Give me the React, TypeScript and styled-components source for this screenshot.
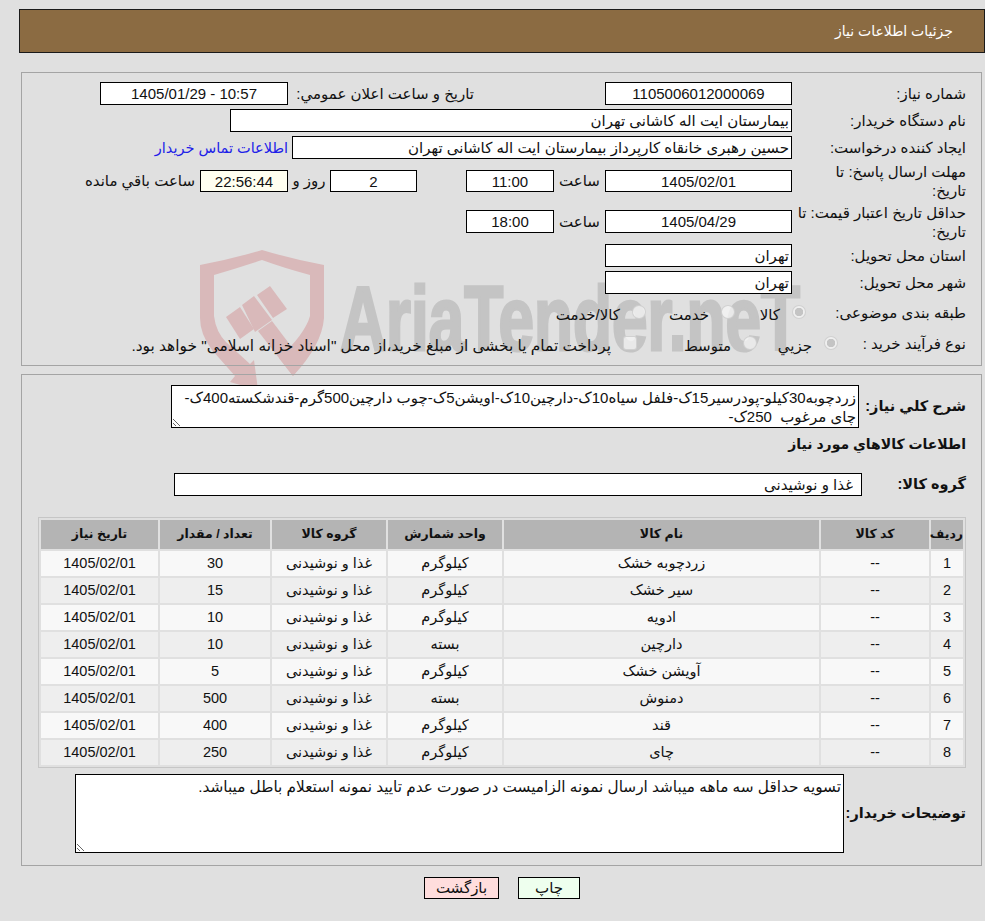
import React from "react";
import styled, { createGlobalStyle } from "styled-components";

const FONT = `"Liberation Sans", "DejaVu Sans", sans-serif`;

const GlobalStyle = createGlobalStyle`
  html, body {
    margin: 0;
    background: #e0e0e0;
  }
  body {
    font-family: ${FONT};
    font-size: 15px;
    color: #111;
    direction: rtl;
  }
`;

const Page = styled.div`
  position: relative;
  width: 985px;
  height: 921px;
  box-sizing: border-box;
  padding: 9px 0 0 19px;
  overflow: hidden;
`;

const Watermark = styled.svg`
  position: absolute;
  left: 190px;
  top: 240px;
  width: 625px;
  height: 160px;
`;

const Content = styled.div`
  position: relative;
  width: 966px;
`;

const Header = styled.div`
  height: 42px;
  line-height: 42px;
  background: #8b6b42;
  border: 1px solid #1a1a1a;
  color: #fff;
  font-size: 14px;
  padding-right: 31px;
  margin-bottom: 19px;
`;

const Panel = styled.div<{ $top?: number; $bottom?: number }>`
  width: 959px;
  margin-right: 3px;
  border: 1px solid #a4a4a4;
  padding: ${(p) => p.$top ?? 9}px 0 ${(p) => p.$bottom ?? 5}px;
  margin-bottom: 8px;
`;

const Row = styled.div<{ $height?: number }>`
  display: flex;
  align-items: center;
  height: ${(p) => p.$height ?? 23}px;
  margin-bottom: 4px;
  padding-right: 15px;
`;

const Label = styled.div<{ $width?: number; $bold?: boolean }>`
  flex: none;
  width: ${(p) => p.$width ?? 174}px;
  padding-left: 4px;
  box-sizing: border-box;
  line-height: 19px;
  font-weight: ${(p) => (p.$bold ? 700 : 400)};
  font-size: ${(p) => (p.$bold ? 14.5 : 15)}px;
  white-space: ${(p) => (p.$bold ? "nowrap" : "normal")};
`;

const Field = styled.input<{
  $width: number;
  $height?: number;
  $ivory?: boolean;
  $center?: boolean;
  $inset?: number;
}>`
  flex: none;
  width: ${(p) => p.$width}px;
  height: ${(p) => p.$height ?? 23}px;
  box-sizing: border-box;
  border: 1px solid #000;
  border-radius: 0;
  outline: none;
  padding: 0 ${(p) => p.$inset ?? 2}px 0 2px;
  margin: 0;
  background: ${(p) => (p.$ivory ? "#fffff0" : "#fff")};
  font-family: ${FONT};
  font-size: 15px;
  color: #111;
  direction: rtl;
  text-align: ${(p) => (p.$center ? "center" : "right")};
`;

const Inline = styled.span<{ $width?: number; $right?: number; $center?: boolean }>`
  flex: none;
  width: ${(p) => (p.$width ? `${p.$width}px` : "auto")};
  padding-right: ${(p) => p.$right ?? 0}px;
  box-sizing: border-box;
  text-align: ${(p) => (p.$center ? "center" : "right")};
  white-space: nowrap;
`;

const ContactLink = styled.a`
  flex: none;
  margin-right: 4px;
  color: #2020e8;
  font-size: 14.5px;
  text-decoration: none;
  white-space: nowrap;
`;

const Option = styled.label<{ $width: number; $size?: number }>`
  flex: none;
  display: flex;
  align-items: center;
  width: ${(p) => p.$width}px;
  padding-top: 6px;
  font-size: ${(p) => p.$size ?? 15}px;
  white-space: nowrap;
`;

const Mark = styled.input<{ $box?: boolean }>`
  appearance: none;
  flex: none;
  width: 14px;
  height: 14px;
  margin: 0 0 6px 12px;
  box-sizing: border-box;
  border: 1.5px solid rgba(205, 205, 205, 0.9);
  border-radius: ${(p) => (p.$box ? "3px" : "50%")};
  background: rgba(245, 245, 245, 0.75);

  &:checked {
    background: radial-gradient(circle, #c4c4c4 0 4px, #efefef 4.5px);
  }
`;

const SectionTitle = styled.div`
  font-weight: 700;
  font-size: 14px;
  line-height: 20px;
  padding-right: 15px;
  margin: 6px 0 19px;
`;

const Notes = styled.textarea<{ $width: number; $height: number; $size?: number }>`
  flex: none;
  width: ${(p) => p.$width}px;
  height: ${(p) => p.$height}px;
  box-sizing: border-box;
  border: 1px solid #000;
  border-radius: 0;
  outline: none;
  margin: 0;
  padding: 2px;
  background: #fff;
  font-family: ${FONT};
  font-size: ${(p) => p.$size ?? 15}px;
  line-height: 19px;
  color: #111;
  direction: rtl;
`;

const ItemsTable = styled.table`
  width: 928px;
  margin: 21px 15px 6px 0;
  table-layout: fixed;
  border: 1px solid #c6c6c6;
  border-collapse: separate;
  border-spacing: 2px;
  font-size: 14.5px;

  th {
    height: 29px;
    padding: 0;
    background: #b4b4b4;
    font-weight: 700;
    font-size: 12.5px;
    line-height: 17px;
  }

  td {
    height: 25px;
    padding: 0;
    line-height: 17px;
    text-align: center;
  }

  tbody tr:nth-child(odd) td {
    background: #f8f8f8;
  }

  tbody tr:nth-child(even) td {
    background: #eeeeee;
  }
`;

const Buttons = styled.div`
  display: flex;
  justify-content: center;
  gap: 19px;
  margin-top: 11px;
`;

const ActionButton = styled.button<{ $tint: string; $width: number }>`
  width: ${(p) => p.$width}px;
  height: 22px;
  padding: 0;
  border: 1px solid #000;
  border-radius: 0;
  background: ${(p) => p.$tint};
  font-family: ${FONT};
  font-size: 15px;
  color: #111;
`;

const columns = [
  { title: "ردیف", width: 32 },
  { title: "کد کالا", width: 108 },
  { title: "نام کالا", width: 315 },
  { title: "واحد شمارش", width: 114 },
  { title: "گروه کالا", width: 114 },
  { title: "تعداد / مقدار", width: 110 },
  { title: "تاریخ نیاز", width: 117 },
];

const items = [
  { name: "زردچوبه خشک", unit: "کیلوگرم", amount: 30 },
  { name: "سیر خشک", unit: "کیلوگرم", amount: 15 },
  { name: "ادویه", unit: "کیلوگرم", amount: 10 },
  { name: "دارچین", unit: "بسته", amount: 10 },
  { name: "آویشن خشک", unit: "کیلوگرم", amount: 5 },
  { name: "دمنوش", unit: "بسته", amount: 500 },
  { name: "قند", unit: "کیلوگرم", amount: 400 },
  { name: "چای", unit: "کیلوگرم", amount: 250 },
];

const GROUP = "غذا و نوشیدنی";
const DESCRIPTION =
  "زردچوبه30کیلو-پودرسیر15ک-فلفل سیاه10ک-دارچین10ک-اویشن5ک-چوب دارچین500گرم-قندشکسته400ک-چای مرغوب  250ک-";
const BUYER_NOTES =
  "تسویه حداقل سه ماهه میباشد ارسال نمونه الزامیست در صورت عدم تایید نمونه استعلام باطل میباشد.";

const App = () => (
  <Page>
    <GlobalStyle />
    <Watermark viewBox="190 240 625 160" aria-hidden="true">
      <g fill="#d9b9ba">
        <path d="M200 265 Q232 259 262 250 Q292 259 324 265 L324 318 Q322 345 293 376 L279 358 Q305 334 310 316 L310 275 Q284 268 262 260 Q238 268 214 275 L214 316 Q216 332 226 342 L250 364 L254 360 L258 390 L230 382 L235 376 L212 350 Q200 334 200 318 Z" />
        <path d="M226 317 L240 307 L254 329 L240 339 Z" />
        <path d="M242 305 L254 296 L272 320 L255 332 Z" />
        <path d="M257 295 L270 286 L287 309 L273 318 Z" />
        <path d="M258 331 L272 321 L303 362 L293 376 Z" />
      </g>
      <text
        x="340"
        y="350"
        fill="#c4c4c4"
        stroke="#c4c4c4"
        strokeWidth="3"
        fontFamily="'Liberation Sans', sans-serif"
        fontWeight="700"
        fontSize="90"
        textLength="460"
        lengthAdjust="spacingAndGlyphs"
        direction="ltr"
      >
        AriaTender.neT
      </text>
    </Watermark>
    <Content>
      <Header>جزئیات اطلاعات نیاز</Header>
      <Panel>
        <Row>
          <Label>شماره نیاز:</Label>
          <Field $width={187} $center readOnly value="1105006012000069" />
          <Inline $width={317} $right={131}>
            تاریخ و ساعت اعلان عمومي:
          </Inline>
          <Field $width={188} $center readOnly value="10:57 - 1405/01/29" />
        </Row>
        <Row>
          <Label>نام دستگاه خریدار:</Label>
          <Field $width={562} readOnly value="بیمارستان ایت اله کاشانی تهران" />
        </Row>
        <Row>
          <Label>ایجاد کننده درخواست:</Label>
          <Field
            $width={500}
            readOnly
            value="حسین رهبری خانقاه کارپرداز بیمارستان ایت اله کاشانی تهران"
          />
          <ContactLink href="#">اطلاعات تماس خریدار</ContactLink>
        </Row>
        <Row $height={36}>
          <Label>
            مهلت ارسال پاسخ: تا
            <br />
            تاریخ:
          </Label>
          <Field $width={187} $height={22} $center readOnly value="1405/02/01" />
          <Inline $width={51} $center>
            ساعت
          </Inline>
          <Field $width={88} $height={22} $center readOnly value="11:00" />
          <Inline $width={49} />
          <Field $width={87} $height={22} $center readOnly value="2" />
          <Inline $width={42} $center>
            روز و
          </Inline>
          <Field $width={88} $height={22} $center $ivory readOnly value="22:56:44" />
          <Inline $right={5}>ساعت باقي مانده</Inline>
        </Row>
        <Row $height={37}>
          <Label>حداقل تاریخ اعتبار قیمت: تا تاریخ:</Label>
          <Field $width={187} $center readOnly value="1405/04/29" />
          <Inline $width={51} $center>
            ساعت
          </Inline>
          <Field $width={88} $center readOnly value="18:00" />
        </Row>
        <Row>
          <Label>استان محل تحویل:</Label>
          <Field $width={187} readOnly value="تهران" />
        </Row>
        <Row>
          <Label>شهر محل تحویل:</Label>
          <Field $width={187} readOnly value="تهران" />
        </Row>
        <Row $height={28}>
          <Label $width={160}>طبقه بندی موضوعی:</Label>
          <Option $width={71}>
            <Mark type="radio" name="category" disabled defaultChecked />
            کالا
          </Option>
          <Option $width={89}>
            <Mark type="radio" name="category" disabled />
            خدمت
          </Option>
          <Option $width={100}>
            <Mark type="radio" name="category" disabled />
            کالا/خدمت
          </Option>
        </Row>
        <Row $height={26}>
          <Label $width={128}>نوع فرآیند خرید :</Label>
          <Option $width={81}>
            <Mark type="radio" name="process" disabled defaultChecked />
            جزيي
          </Option>
          <Option $width={120}>
            <Mark type="radio" name="process" disabled />
            متوسط
          </Option>
          <Option $width={520} $size={15.4}>
            <Mark type="checkbox" $box disabled />
            پرداخت تمام یا بخشی از مبلغ خرید،از محل "اسناد خزانه اسلامی" خواهد بود.
          </Option>
        </Row>
      </Panel>
      <Panel $top={10} $bottom={8}>
        <Row $height={43}>
          <Label $width={107} $bold>
            شرح کلي نياز:
          </Label>
          <Notes $width={688} $height={43} readOnly defaultValue={DESCRIPTION} />
        </Row>
        <SectionTitle>اطلاعات کالاهاي مورد نياز</SectionTitle>
        <Row>
          <Label $width={104} $bold>
            گروه کالا:
          </Label>
          <Field $width={688} $inset={8} readOnly value={GROUP} />
        </Row>
        <ItemsTable>
          <colgroup>
            {columns.map((column) => (
              <col key={column.title} style={{ width: column.width }} />
            ))}
          </colgroup>
          <thead>
            <tr>
              {columns.map((column) => (
                <th key={column.title}>{column.title}</th>
              ))}
            </tr>
          </thead>
          <tbody>
            {items.map((item, index) => (
              <tr key={item.name}>
                <td>{index + 1}</td>
                <td>--</td>
                <td>{item.name}</td>
                <td>{item.unit}</td>
                <td>{GROUP}</td>
                <td>{item.amount}</td>
                <td>1405/02/01</td>
              </tr>
            ))}
          </tbody>
        </ItemsTable>
        <Row $height={79}>
          <Label $width={122} $bold>
            توضیحات خریدار:
          </Label>
          <Notes $width={769} $height={79} $size={15.3} readOnly defaultValue={BUYER_NOTES} />
        </Row>
      </Panel>
      <Buttons>
        <ActionButton $tint="#eeffee" $width={62}>
          چاپ
        </ActionButton>
        <ActionButton $tint="#ffdddd" $width={75}>
          بازگشت
        </ActionButton>
      </Buttons>
    </Content>
  </Page>
);

export default App;
